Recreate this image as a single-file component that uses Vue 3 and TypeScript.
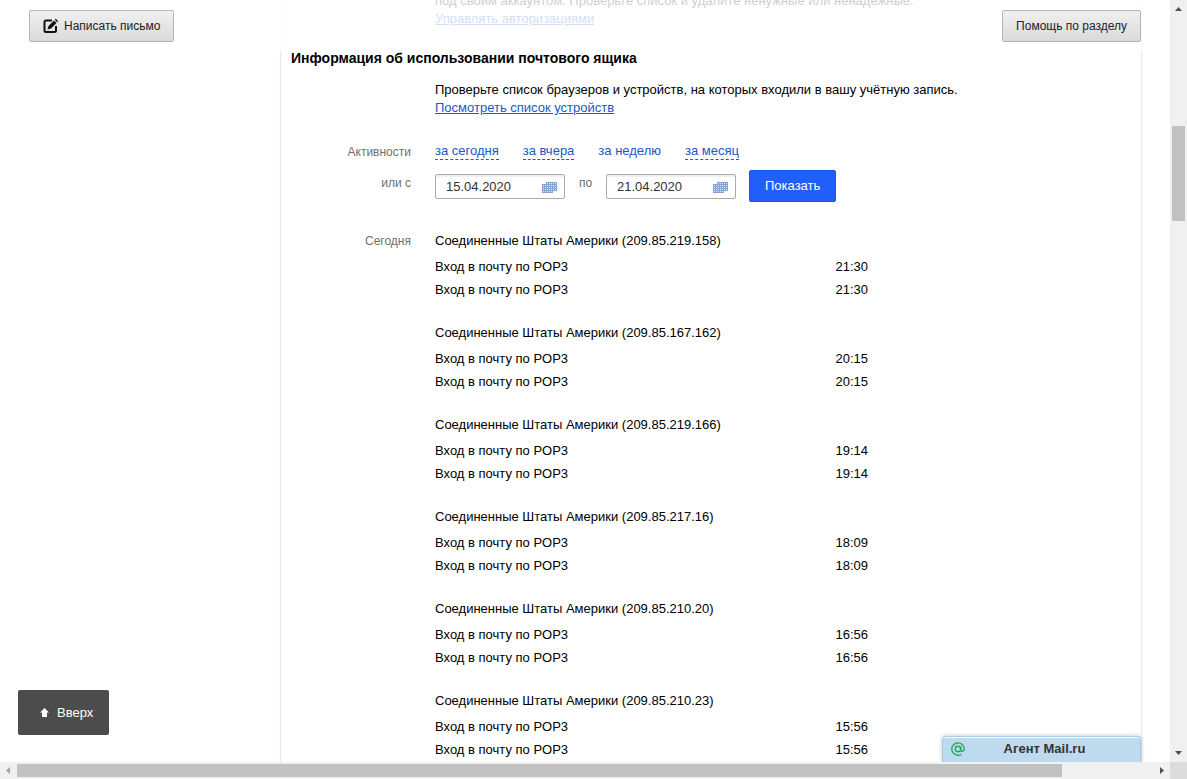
<script setup lang="ts">
import { ref } from 'vue'

interface Session {
  ip: string
  time: string
}

const periods = [
  { title: 'за сегодня', current: false },
  { title: 'за вчера', current: false },
  { title: 'за неделю', current: true },
  { title: 'за месяц', current: false },
]

const dateFrom = ref('15.04.2020')
const dateTo = ref('21.04.2020')

const sessions: Session[] = [
  { ip: '209.85.219.158', time: '21:30' },
  { ip: '209.85.167.162', time: '20:15' },
  { ip: '209.85.219.166', time: '19:14' },
  { ip: '209.85.217.16', time: '18:09' },
  { ip: '209.85.210.20', time: '16:56' },
  { ip: '209.85.210.23', time: '15:56' },
]
</script>

<template>
  <div class="window">
    <div class="viewport">
      <main class="panel">
        <section class="row intro">
          <div class="content">
            <p>под своим аккаунтом. Проверьте список и удалите ненужные или ненадёжные.</p>
            <a href="#auth">Управлять авторизациями</a>
          </div>
        </section>

        <h2>Информация об использовании почтового ящика</h2>

        <section class="row devices">
          <div class="content">
            <p>Проверьте список браузеров и устройств, на которых входили в вашу учётную запись.</p>
            <a href="#devices">Посмотреть список устройств</a>
          </div>
        </section>

        <form class="filter" @submit.prevent>
          <div class="row">
            <span class="label">Активности</span>
            <nav class="content periods">
              <a v-for="p in periods" :key="p.title" href="#period" :class="{ current: p.current }">{{ p.title }}</a>
            </nav>
          </div>
          <div class="row">
            <label class="label" for="from">или с</label>
            <div class="content dates">
              <span class="date">
                <input id="from" v-model="dateFrom" type="text" />
                <svg class="calendar" width="16" height="12" viewBox="0 0 16 12">
                  <path d="M4 0h11v9h-4v2H0V2h4z" fill="#84a3ce" />
                  <path d="M5 1.500h9M1 3.500h13M1 5.500h13M1 7.500h13M1 9.500h9" stroke="#dfe8f3" stroke-dasharray="1 1" />
                </svg>
              </span>
              <label class="label to" for="to">по</label>
              <span class="date">
                <input id="to" v-model="dateTo" type="text" />
                <svg class="calendar" width="16" height="12" viewBox="0 0 16 12">
                  <path d="M4 0h11v9h-4v2H0V2h4z" fill="#84a3ce" />
                  <path d="M5 1.500h9M1 3.500h13M1 5.500h13M1 7.500h13M1 9.500h9" stroke="#dfe8f3" stroke-dasharray="1 1" />
                </svg>
              </span>
              <button class="show" type="submit">Показать</button>
            </div>
          </div>
        </form>

        <section class="row">
          <span class="label today">Сегодня</span>
          <div class="content log">
            <article v-for="s in sessions" :key="s.ip">
              <h3>Соединенные Штаты Америки ({{ s.ip }})</h3>
              <table>
                <tbody>
                  <tr v-for="n in 2" :key="n">
                    <td>Вход в почту по POP3</td>
                    <td class="time">{{ s.time }}</td>
                  </tr>
                </tbody>
              </table>
            </article>
          </div>
        </section>
      </main>

      <header class="toolbar">
        <button class="gray" type="button">
          <svg width="15" height="16" viewBox="0 0 15 16">
            <path d="M9 2.500H3Q1.500 2.500 1.500 4v8.500Q1.500 14 3 14h8.500q1.500 0 1.500-1.500V8" fill="none" stroke="#111" stroke-width="2" />
            <path d="M4.500 11.500l1-3.500L11 2.500 13.500 5 8 10.500zM11.800 1.700l1-1 2.500 2.500-1 1z" fill="#111" />
          </svg>
          Написать письмо
        </button>
        <button class="gray" type="button">Помощь по разделу</button>
      </header>

      <button class="up" type="button">
        <svg width="9" height="9" viewBox="0 0 9 9"><path d="M4.500 0L9 4.500H7V9H2V4.500H0z" fill="#fff" /></svg>
        Вверх
      </button>

      <button class="agent" type="button">
        <svg width="14" height="14" viewBox="0 0 14 14" fill="none" stroke="#1faa59" stroke-width="1.400">
          <circle cx="7" cy="7" r="2.700" />
          <path d="M9.700 4.200v3.600c0 2.400 3.500 2 3.500-.8A6.200 6.200 0 1 0 10.300 12.300" />
        </svg>
        <span>Агент Mail.ru</span>
      </button>
    </div>

    <div class="vbar">
      <svg width="17" height="17" viewBox="0 0 17 17"><path d="M5 11h7L8.500 7z" fill="#505050" /></svg>
      <div class="vtrack"><div class="vthumb"></div></div>
      <svg width="17" height="17" viewBox="0 0 17 17"><path d="M5 6h7L8.500 10z" fill="#505050" /></svg>
    </div>
    <div class="hbar">
      <svg width="17" height="17" viewBox="0 0 17 17"><path d="M10 5v7L6 8.500z" fill="#a3a3a3" /></svg>
      <div class="htrack"><div class="hthumb"></div></div>
      <svg width="17" height="17" viewBox="0 0 17 17"><path d="M7 5v7l4-3.500z" fill="#505050" /></svg>
    </div>
    <div class="corner"></div>
  </div>
</template>

<style>
body {
  background: #fff;
}
</style>

<style scoped>
.window {
  display: grid;
  grid-template: minmax(0, 1fr) 17px / minmax(0, 1fr) 17px;
  height: 100vh;
  font: 13px/18px "Liberation Sans", Arial, sans-serif;
  color: #000;
}
.viewport {
  position: relative;
  overflow: hidden;
}
button,
input {
  font: inherit;
  box-sizing: border-box;
  margin: 0;
}
p,
h2,
h3 {
  margin: 0;
}
a {
  color: #2058c8;
}
.panel {
  min-height: 100vh;
  margin: -8px 28px 0 280px;
  padding-left: 10px;
  border-left: 1px solid #e9e9e9;
  border-right: 1px solid #ececec;
  box-shadow: 0 0 2px rgba(0, 0, 0, 0.06);
}
.row {
  display: grid;
  grid-template-columns: 120px minmax(0, 1fr);
  column-gap: 24px;
}
.content {
  grid-column: 2;
}
h2 {
  margin-top: 21px;
  font-size: 14px;
  line-height: 18px;
}
.devices {
  margin-top: 14px;
}
.label {
  color: #707070;
  font-size: 12px;
  text-align: right;
}
.filter {
  display: grid;
  row-gap: 9px;
  margin-top: 26px;
}
.periods {
  display: flex;
  align-items: flex-start;
  gap: 24px;
}
.periods a {
  line-height: 16px;
  border-bottom: 1px dashed #2058c8;
  text-decoration: none;
}
.periods a.current {
  border-color: transparent;
}
.filter .row + .row .label {
  line-height: 26px;
}
.dates {
  display: flex;
  align-items: center;
}
.date {
  position: relative;
  display: flex;
}
.date input {
  width: 130px;
  height: 25px;
  padding: 0 10px;
  border: 1px solid #aaa;
  border-radius: 2px;
  background: #fff;
  box-shadow: inset 0 2px 1px #f0f0f0;
  color: #333;
}
.calendar {
  position: absolute;
  right: 7px;
  top: 8px;
}
.to {
  align-self: flex-start;
  width: 41px;
  text-align: center;
}
.show {
  height: 32px;
  margin-left: 13px;
  padding: 0 15px;
  border: 1px solid #1857e0;
  border-radius: 2px;
  background: #205ffa;
  color: #fff;
}
.today {
  margin-top: 30px;
}
.log {
  display: grid;
  row-gap: 23px;
  max-width: 433px;
  margin-top: 30px;
}
h3 {
  margin-bottom: 5px;
  font-size: 13px;
  font-weight: 400;
}
table {
  width: 100%;
  border-collapse: collapse;
}
td {
  height: 23px;
  padding: 0;
}
.time {
  text-align: right;
}
.toolbar {
  position: absolute;
  inset: 0 0 auto;
  display: flex;
  justify-content: space-between;
  box-sizing: border-box;
  height: 52px;
  padding: 10px 29px;
  background: rgba(255, 255, 255, 0.8);
}
.gray {
  display: flex;
  align-items: center;
  gap: 6px;
  height: 32px;
  padding: 0 13px;
  border: 1px solid #b5b5b5;
  border-radius: 2px;
  background: linear-gradient(#f0f0f0, #dadada);
  color: #222;
  font-size: 12px;
}
.up {
  position: absolute;
  left: 18px;
  bottom: 27px;
  display: flex;
  align-items: center;
  gap: 8px;
  height: 45px;
  padding: 0 16px 0 22px;
  border: 0;
  border-radius: 2px;
  background: #4c4c4c;
  color: #fff;
}
.agent {
  position: absolute;
  right: 29px;
  bottom: 0;
  display: flex;
  align-items: center;
  width: 199px;
  height: 26px;
  padding: 0 8px 2px;
  border: 1px solid #a9cbe4;
  border-bottom: 0;
  border-radius: 4px 4px 0 0;
  background: #bddaee;
  box-shadow: inset 0 1px #fff, 0 0 4px rgba(0, 0, 0, 0.25);
  color: #333;
  font-weight: 700;
}
.agent span {
  flex: 1;
  padding-right: 8px;
}
.vbar,
.hbar {
  display: flex;
  background: #f0f0f0;
}
.vbar {
  flex-direction: column;
}
.vbar svg,
.hbar svg {
  flex: none;
}
.vtrack,
.htrack {
  flex: 1;
}
.vthumb {
  width: 13px;
  height: 13%;
  margin: 109px auto 0;
  background: #c1c1c1;
}
.hthumb {
  width: 92%;
  height: 13px;
  margin-top: 2px;
  background: #c1c1c1;
}
.corner {
  background: #dcdcdc;
}
</style>
